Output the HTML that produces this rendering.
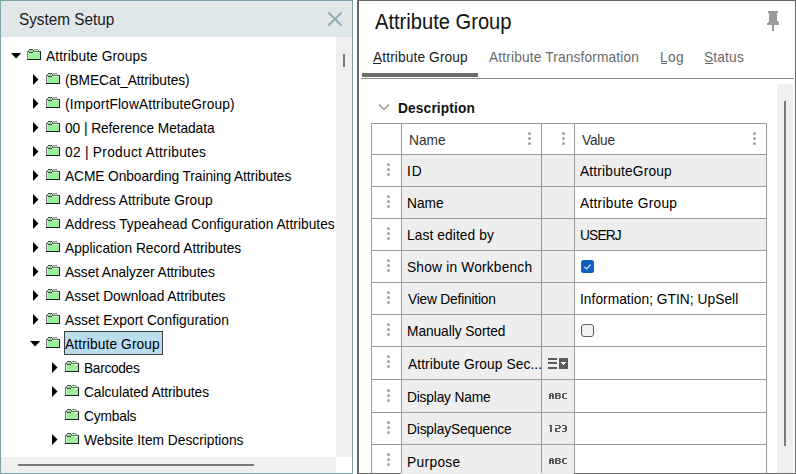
<!DOCTYPE html><html><head><meta charset="utf-8"><style>
*{margin:0;padding:0;box-sizing:border-box}
html,body{width:796px;height:474px;overflow:hidden;background:#fff;font-family:"Liberation Sans", sans-serif;}
.abs{position:absolute}
.t{position:absolute;white-space:nowrap;font-size:13.75px;line-height:16px;color:#000}
</style></head><body>
<div class="abs" style="left:0;top:0;width:353px;height:474px;border:1px solid #7ea2a9;background:#fff"></div>
<div class="abs" style="left:1px;top:1px;width:351px;height:36px;background:#dfe7e9;border-bottom:1px solid #d8e4e5"></div>
<div class="t" style="left:19px;top:10px;font-size:17px;line-height:20px;color:#1b1b1b;transform:scaleX(0.9);transform-origin:0 0">System Setup</div>
<svg class="abs" style="left:327px;top:11px" width="16" height="16" viewBox="0 0 16 16"><path d="M1.5 1.5 L14.5 14.5 M14.5 1.5 L1.5 14.5" stroke="#8aabb1" stroke-width="1.8"/></svg>
<div class="abs" style="left:336px;top:37px;width:16px;height:420px;background:#efefef"></div>
<div class="abs" style="left:343px;top:54px;width:2px;height:13px;background:#7a7a7a"></div>
<div class="abs" style="left:1px;top:457px;width:335px;height:16px;background:#efefef"></div>
<div class="abs" style="left:18px;top:464px;width:236px;height:2px;background:#7a7a7a"></div>
<div class="abs" style="left:11px;top:53px;line-height:0"><svg width="11" height="6" viewBox="0 0 11 6"><polygon points="0,0 10.2,0 5.1,5.4" fill="#000"/></svg></div>
<div class="abs" style="left:27px;top:49px;line-height:0"><svg width="14" height="11" viewBox="0 0 14 11" shape-rendering="crispEdges"><rect x="2" y="0" width="4" height="1" fill="#4a4a4a"/><rect x="7" y="0" width="4" height="1" fill="#8a8a8a"/><rect x="1" y="1" width="1" height="1" fill="#8a8a8a"/><rect x="2" y="1" width="4" height="2" fill="#8ae88a"/><rect x="6" y="1" width="1" height="1" fill="#555"/><rect x="7" y="1" width="4" height="1" fill="#c8f4c8"/><rect x="11" y="1" width="1" height="1" fill="#999"/><rect x="0" y="2" width="1" height="8" fill="#777"/><rect x="1" y="2" width="1" height="1" fill="#555"/><rect x="6" y="2" width="7" height="1" fill="#6a6a6a"/><rect x="13" y="2" width="1" height="8" fill="#222"/><rect x="1" y="3" width="12" height="7" fill="#98f098"/><rect x="1" y="3" width="1" height="7" fill="#c8f8c8"/><rect x="6" y="3" width="7" height="1" fill="#d8f8d8"/><rect x="2" y="3" width="4" height="1" fill="#444"/><rect x="0" y="10" width="14" height="1" fill="#1e1e1e"/></svg></div>
<div class="t" style="left:46px;top:49px;letter-spacing:0.067px">Attribute Groups</div>
<div class="abs" style="left:33px;top:74px;line-height:0"><svg width="6" height="11" viewBox="0 0 6 11"><polygon points="0,0 5.5,5.5 0,11" fill="#000"/></svg></div>
<div class="abs" style="left:46px;top:73px;line-height:0"><svg width="14" height="11" viewBox="0 0 14 11" shape-rendering="crispEdges"><rect x="2" y="0" width="4" height="1" fill="#4a4a4a"/><rect x="7" y="0" width="4" height="1" fill="#8a8a8a"/><rect x="1" y="1" width="1" height="1" fill="#8a8a8a"/><rect x="2" y="1" width="4" height="2" fill="#8ae88a"/><rect x="6" y="1" width="1" height="1" fill="#555"/><rect x="7" y="1" width="4" height="1" fill="#c8f4c8"/><rect x="11" y="1" width="1" height="1" fill="#999"/><rect x="0" y="2" width="1" height="8" fill="#777"/><rect x="1" y="2" width="1" height="1" fill="#555"/><rect x="6" y="2" width="7" height="1" fill="#6a6a6a"/><rect x="13" y="2" width="1" height="8" fill="#222"/><rect x="1" y="3" width="12" height="7" fill="#98f098"/><rect x="1" y="3" width="1" height="7" fill="#c8f8c8"/><rect x="6" y="3" width="7" height="1" fill="#d8f8d8"/><rect x="2" y="3" width="4" height="1" fill="#444"/><rect x="0" y="10" width="14" height="1" fill="#1e1e1e"/></svg></div>
<div class="t" style="left:65px;top:73px;letter-spacing:-0.083px">(BMECat_Attributes)</div>
<div class="abs" style="left:33px;top:98px;line-height:0"><svg width="6" height="11" viewBox="0 0 6 11"><polygon points="0,0 5.5,5.5 0,11" fill="#000"/></svg></div>
<div class="abs" style="left:46px;top:97px;line-height:0"><svg width="14" height="11" viewBox="0 0 14 11" shape-rendering="crispEdges"><rect x="2" y="0" width="4" height="1" fill="#4a4a4a"/><rect x="7" y="0" width="4" height="1" fill="#8a8a8a"/><rect x="1" y="1" width="1" height="1" fill="#8a8a8a"/><rect x="2" y="1" width="4" height="2" fill="#8ae88a"/><rect x="6" y="1" width="1" height="1" fill="#555"/><rect x="7" y="1" width="4" height="1" fill="#c8f4c8"/><rect x="11" y="1" width="1" height="1" fill="#999"/><rect x="0" y="2" width="1" height="8" fill="#777"/><rect x="1" y="2" width="1" height="1" fill="#555"/><rect x="6" y="2" width="7" height="1" fill="#6a6a6a"/><rect x="13" y="2" width="1" height="8" fill="#222"/><rect x="1" y="3" width="12" height="7" fill="#98f098"/><rect x="1" y="3" width="1" height="7" fill="#c8f8c8"/><rect x="6" y="3" width="7" height="1" fill="#d8f8d8"/><rect x="2" y="3" width="4" height="1" fill="#444"/><rect x="0" y="10" width="14" height="1" fill="#1e1e1e"/></svg></div>
<div class="t" style="left:65px;top:97px;letter-spacing:0.124px">(ImportFlowAttributeGroup)</div>
<div class="abs" style="left:33px;top:122px;line-height:0"><svg width="6" height="11" viewBox="0 0 6 11"><polygon points="0,0 5.5,5.5 0,11" fill="#000"/></svg></div>
<div class="abs" style="left:46px;top:121px;line-height:0"><svg width="14" height="11" viewBox="0 0 14 11" shape-rendering="crispEdges"><rect x="2" y="0" width="4" height="1" fill="#4a4a4a"/><rect x="7" y="0" width="4" height="1" fill="#8a8a8a"/><rect x="1" y="1" width="1" height="1" fill="#8a8a8a"/><rect x="2" y="1" width="4" height="2" fill="#8ae88a"/><rect x="6" y="1" width="1" height="1" fill="#555"/><rect x="7" y="1" width="4" height="1" fill="#c8f4c8"/><rect x="11" y="1" width="1" height="1" fill="#999"/><rect x="0" y="2" width="1" height="8" fill="#777"/><rect x="1" y="2" width="1" height="1" fill="#555"/><rect x="6" y="2" width="7" height="1" fill="#6a6a6a"/><rect x="13" y="2" width="1" height="8" fill="#222"/><rect x="1" y="3" width="12" height="7" fill="#98f098"/><rect x="1" y="3" width="1" height="7" fill="#c8f8c8"/><rect x="6" y="3" width="7" height="1" fill="#d8f8d8"/><rect x="2" y="3" width="4" height="1" fill="#444"/><rect x="0" y="10" width="14" height="1" fill="#1e1e1e"/></svg></div>
<div class="t" style="left:65px;top:121px;letter-spacing:-0.068px">00 | Reference Metadata</div>
<div class="abs" style="left:33px;top:146px;line-height:0"><svg width="6" height="11" viewBox="0 0 6 11"><polygon points="0,0 5.5,5.5 0,11" fill="#000"/></svg></div>
<div class="abs" style="left:46px;top:145px;line-height:0"><svg width="14" height="11" viewBox="0 0 14 11" shape-rendering="crispEdges"><rect x="2" y="0" width="4" height="1" fill="#4a4a4a"/><rect x="7" y="0" width="4" height="1" fill="#8a8a8a"/><rect x="1" y="1" width="1" height="1" fill="#8a8a8a"/><rect x="2" y="1" width="4" height="2" fill="#8ae88a"/><rect x="6" y="1" width="1" height="1" fill="#555"/><rect x="7" y="1" width="4" height="1" fill="#c8f4c8"/><rect x="11" y="1" width="1" height="1" fill="#999"/><rect x="0" y="2" width="1" height="8" fill="#777"/><rect x="1" y="2" width="1" height="1" fill="#555"/><rect x="6" y="2" width="7" height="1" fill="#6a6a6a"/><rect x="13" y="2" width="1" height="8" fill="#222"/><rect x="1" y="3" width="12" height="7" fill="#98f098"/><rect x="1" y="3" width="1" height="7" fill="#c8f8c8"/><rect x="6" y="3" width="7" height="1" fill="#d8f8d8"/><rect x="2" y="3" width="4" height="1" fill="#444"/><rect x="0" y="10" width="14" height="1" fill="#1e1e1e"/></svg></div>
<div class="t" style="left:65px;top:145px;letter-spacing:0.268px">02 | Product Attributes</div>
<div class="abs" style="left:33px;top:170px;line-height:0"><svg width="6" height="11" viewBox="0 0 6 11"><polygon points="0,0 5.5,5.5 0,11" fill="#000"/></svg></div>
<div class="abs" style="left:46px;top:169px;line-height:0"><svg width="14" height="11" viewBox="0 0 14 11" shape-rendering="crispEdges"><rect x="2" y="0" width="4" height="1" fill="#4a4a4a"/><rect x="7" y="0" width="4" height="1" fill="#8a8a8a"/><rect x="1" y="1" width="1" height="1" fill="#8a8a8a"/><rect x="2" y="1" width="4" height="2" fill="#8ae88a"/><rect x="6" y="1" width="1" height="1" fill="#555"/><rect x="7" y="1" width="4" height="1" fill="#c8f4c8"/><rect x="11" y="1" width="1" height="1" fill="#999"/><rect x="0" y="2" width="1" height="8" fill="#777"/><rect x="1" y="2" width="1" height="1" fill="#555"/><rect x="6" y="2" width="7" height="1" fill="#6a6a6a"/><rect x="13" y="2" width="1" height="8" fill="#222"/><rect x="1" y="3" width="12" height="7" fill="#98f098"/><rect x="1" y="3" width="1" height="7" fill="#c8f8c8"/><rect x="6" y="3" width="7" height="1" fill="#d8f8d8"/><rect x="2" y="3" width="4" height="1" fill="#444"/><rect x="0" y="10" width="14" height="1" fill="#1e1e1e"/></svg></div>
<div class="t" style="left:65px;top:169px;letter-spacing:-0.088px">ACME Onboarding Training Attributes</div>
<div class="abs" style="left:33px;top:194px;line-height:0"><svg width="6" height="11" viewBox="0 0 6 11"><polygon points="0,0 5.5,5.5 0,11" fill="#000"/></svg></div>
<div class="abs" style="left:46px;top:193px;line-height:0"><svg width="14" height="11" viewBox="0 0 14 11" shape-rendering="crispEdges"><rect x="2" y="0" width="4" height="1" fill="#4a4a4a"/><rect x="7" y="0" width="4" height="1" fill="#8a8a8a"/><rect x="1" y="1" width="1" height="1" fill="#8a8a8a"/><rect x="2" y="1" width="4" height="2" fill="#8ae88a"/><rect x="6" y="1" width="1" height="1" fill="#555"/><rect x="7" y="1" width="4" height="1" fill="#c8f4c8"/><rect x="11" y="1" width="1" height="1" fill="#999"/><rect x="0" y="2" width="1" height="8" fill="#777"/><rect x="1" y="2" width="1" height="1" fill="#555"/><rect x="6" y="2" width="7" height="1" fill="#6a6a6a"/><rect x="13" y="2" width="1" height="8" fill="#222"/><rect x="1" y="3" width="12" height="7" fill="#98f098"/><rect x="1" y="3" width="1" height="7" fill="#c8f8c8"/><rect x="6" y="3" width="7" height="1" fill="#d8f8d8"/><rect x="2" y="3" width="4" height="1" fill="#444"/><rect x="0" y="10" width="14" height="1" fill="#1e1e1e"/></svg></div>
<div class="t" style="left:65px;top:193px;letter-spacing:0.036px">Address Attribute Group</div>
<div class="abs" style="left:33px;top:218px;line-height:0"><svg width="6" height="11" viewBox="0 0 6 11"><polygon points="0,0 5.5,5.5 0,11" fill="#000"/></svg></div>
<div class="abs" style="left:46px;top:217px;line-height:0"><svg width="14" height="11" viewBox="0 0 14 11" shape-rendering="crispEdges"><rect x="2" y="0" width="4" height="1" fill="#4a4a4a"/><rect x="7" y="0" width="4" height="1" fill="#8a8a8a"/><rect x="1" y="1" width="1" height="1" fill="#8a8a8a"/><rect x="2" y="1" width="4" height="2" fill="#8ae88a"/><rect x="6" y="1" width="1" height="1" fill="#555"/><rect x="7" y="1" width="4" height="1" fill="#c8f4c8"/><rect x="11" y="1" width="1" height="1" fill="#999"/><rect x="0" y="2" width="1" height="8" fill="#777"/><rect x="1" y="2" width="1" height="1" fill="#555"/><rect x="6" y="2" width="7" height="1" fill="#6a6a6a"/><rect x="13" y="2" width="1" height="8" fill="#222"/><rect x="1" y="3" width="12" height="7" fill="#98f098"/><rect x="1" y="3" width="1" height="7" fill="#c8f8c8"/><rect x="6" y="3" width="7" height="1" fill="#d8f8d8"/><rect x="2" y="3" width="4" height="1" fill="#444"/><rect x="0" y="10" width="14" height="1" fill="#1e1e1e"/></svg></div>
<div class="t" style="left:65px;top:217px;letter-spacing:0.022px">Address Typeahead Configuration Attributes</div>
<div class="abs" style="left:33px;top:242px;line-height:0"><svg width="6" height="11" viewBox="0 0 6 11"><polygon points="0,0 5.5,5.5 0,11" fill="#000"/></svg></div>
<div class="abs" style="left:46px;top:241px;line-height:0"><svg width="14" height="11" viewBox="0 0 14 11" shape-rendering="crispEdges"><rect x="2" y="0" width="4" height="1" fill="#4a4a4a"/><rect x="7" y="0" width="4" height="1" fill="#8a8a8a"/><rect x="1" y="1" width="1" height="1" fill="#8a8a8a"/><rect x="2" y="1" width="4" height="2" fill="#8ae88a"/><rect x="6" y="1" width="1" height="1" fill="#555"/><rect x="7" y="1" width="4" height="1" fill="#c8f4c8"/><rect x="11" y="1" width="1" height="1" fill="#999"/><rect x="0" y="2" width="1" height="8" fill="#777"/><rect x="1" y="2" width="1" height="1" fill="#555"/><rect x="6" y="2" width="7" height="1" fill="#6a6a6a"/><rect x="13" y="2" width="1" height="8" fill="#222"/><rect x="1" y="3" width="12" height="7" fill="#98f098"/><rect x="1" y="3" width="1" height="7" fill="#c8f8c8"/><rect x="6" y="3" width="7" height="1" fill="#d8f8d8"/><rect x="2" y="3" width="4" height="1" fill="#444"/><rect x="0" y="10" width="14" height="1" fill="#1e1e1e"/></svg></div>
<div class="t" style="left:65px;top:241px;letter-spacing:-0.011px">Application Record Attributes</div>
<div class="abs" style="left:33px;top:266px;line-height:0"><svg width="6" height="11" viewBox="0 0 6 11"><polygon points="0,0 5.5,5.5 0,11" fill="#000"/></svg></div>
<div class="abs" style="left:46px;top:265px;line-height:0"><svg width="14" height="11" viewBox="0 0 14 11" shape-rendering="crispEdges"><rect x="2" y="0" width="4" height="1" fill="#4a4a4a"/><rect x="7" y="0" width="4" height="1" fill="#8a8a8a"/><rect x="1" y="1" width="1" height="1" fill="#8a8a8a"/><rect x="2" y="1" width="4" height="2" fill="#8ae88a"/><rect x="6" y="1" width="1" height="1" fill="#555"/><rect x="7" y="1" width="4" height="1" fill="#c8f4c8"/><rect x="11" y="1" width="1" height="1" fill="#999"/><rect x="0" y="2" width="1" height="8" fill="#777"/><rect x="1" y="2" width="1" height="1" fill="#555"/><rect x="6" y="2" width="7" height="1" fill="#6a6a6a"/><rect x="13" y="2" width="1" height="8" fill="#222"/><rect x="1" y="3" width="12" height="7" fill="#98f098"/><rect x="1" y="3" width="1" height="7" fill="#c8f8c8"/><rect x="6" y="3" width="7" height="1" fill="#d8f8d8"/><rect x="2" y="3" width="4" height="1" fill="#444"/><rect x="0" y="10" width="14" height="1" fill="#1e1e1e"/></svg></div>
<div class="t" style="left:65px;top:265px;letter-spacing:-0.096px">Asset Analyzer Attributes</div>
<div class="abs" style="left:33px;top:290px;line-height:0"><svg width="6" height="11" viewBox="0 0 6 11"><polygon points="0,0 5.5,5.5 0,11" fill="#000"/></svg></div>
<div class="abs" style="left:46px;top:289px;line-height:0"><svg width="14" height="11" viewBox="0 0 14 11" shape-rendering="crispEdges"><rect x="2" y="0" width="4" height="1" fill="#4a4a4a"/><rect x="7" y="0" width="4" height="1" fill="#8a8a8a"/><rect x="1" y="1" width="1" height="1" fill="#8a8a8a"/><rect x="2" y="1" width="4" height="2" fill="#8ae88a"/><rect x="6" y="1" width="1" height="1" fill="#555"/><rect x="7" y="1" width="4" height="1" fill="#c8f4c8"/><rect x="11" y="1" width="1" height="1" fill="#999"/><rect x="0" y="2" width="1" height="8" fill="#777"/><rect x="1" y="2" width="1" height="1" fill="#555"/><rect x="6" y="2" width="7" height="1" fill="#6a6a6a"/><rect x="13" y="2" width="1" height="8" fill="#222"/><rect x="1" y="3" width="12" height="7" fill="#98f098"/><rect x="1" y="3" width="1" height="7" fill="#c8f8c8"/><rect x="6" y="3" width="7" height="1" fill="#d8f8d8"/><rect x="2" y="3" width="4" height="1" fill="#444"/><rect x="0" y="10" width="14" height="1" fill="#1e1e1e"/></svg></div>
<div class="t" style="left:65px;top:289px;letter-spacing:-0.004px">Asset Download Attributes</div>
<div class="abs" style="left:33px;top:314px;line-height:0"><svg width="6" height="11" viewBox="0 0 6 11"><polygon points="0,0 5.5,5.5 0,11" fill="#000"/></svg></div>
<div class="abs" style="left:46px;top:313px;line-height:0"><svg width="14" height="11" viewBox="0 0 14 11" shape-rendering="crispEdges"><rect x="2" y="0" width="4" height="1" fill="#4a4a4a"/><rect x="7" y="0" width="4" height="1" fill="#8a8a8a"/><rect x="1" y="1" width="1" height="1" fill="#8a8a8a"/><rect x="2" y="1" width="4" height="2" fill="#8ae88a"/><rect x="6" y="1" width="1" height="1" fill="#555"/><rect x="7" y="1" width="4" height="1" fill="#c8f4c8"/><rect x="11" y="1" width="1" height="1" fill="#999"/><rect x="0" y="2" width="1" height="8" fill="#777"/><rect x="1" y="2" width="1" height="1" fill="#555"/><rect x="6" y="2" width="7" height="1" fill="#6a6a6a"/><rect x="13" y="2" width="1" height="8" fill="#222"/><rect x="1" y="3" width="12" height="7" fill="#98f098"/><rect x="1" y="3" width="1" height="7" fill="#c8f8c8"/><rect x="6" y="3" width="7" height="1" fill="#d8f8d8"/><rect x="2" y="3" width="4" height="1" fill="#444"/><rect x="0" y="10" width="14" height="1" fill="#1e1e1e"/></svg></div>
<div class="t" style="left:65px;top:313px;letter-spacing:0.012px">Asset Export Configuration</div>
<div class="abs" style="left:30px;top:341px;line-height:0"><svg width="11" height="6" viewBox="0 0 11 6"><polygon points="0,0 10.2,0 5.1,5.4" fill="#000"/></svg></div>
<div class="abs" style="left:46px;top:337px;line-height:0"><svg width="14" height="11" viewBox="0 0 14 11" shape-rendering="crispEdges"><rect x="2" y="0" width="4" height="1" fill="#4a4a4a"/><rect x="7" y="0" width="4" height="1" fill="#8a8a8a"/><rect x="1" y="1" width="1" height="1" fill="#8a8a8a"/><rect x="2" y="1" width="4" height="2" fill="#8ae88a"/><rect x="6" y="1" width="1" height="1" fill="#555"/><rect x="7" y="1" width="4" height="1" fill="#c8f4c8"/><rect x="11" y="1" width="1" height="1" fill="#999"/><rect x="0" y="2" width="1" height="8" fill="#777"/><rect x="1" y="2" width="1" height="1" fill="#555"/><rect x="6" y="2" width="7" height="1" fill="#6a6a6a"/><rect x="13" y="2" width="1" height="8" fill="#222"/><rect x="1" y="3" width="12" height="7" fill="#98f098"/><rect x="1" y="3" width="1" height="7" fill="#c8f8c8"/><rect x="6" y="3" width="7" height="1" fill="#d8f8d8"/><rect x="2" y="3" width="4" height="1" fill="#444"/><rect x="0" y="10" width="14" height="1" fill="#1e1e1e"/></svg></div>
<div class="abs" style="left:64px;top:331px;width:99px;height:24px;background:#badcef;border:1px solid #40403e"></div>
<div class="t" style="left:65px;top:337px;letter-spacing:0.107px">Attribute Group</div>
<div class="abs" style="left:52px;top:362px;line-height:0"><svg width="6" height="11" viewBox="0 0 6 11"><polygon points="0,0 5.5,5.5 0,11" fill="#000"/></svg></div>
<div class="abs" style="left:65px;top:361px;line-height:0"><svg width="14" height="11" viewBox="0 0 14 11" shape-rendering="crispEdges"><rect x="2" y="0" width="4" height="1" fill="#4a4a4a"/><rect x="7" y="0" width="4" height="1" fill="#8a8a8a"/><rect x="1" y="1" width="1" height="1" fill="#8a8a8a"/><rect x="2" y="1" width="4" height="2" fill="#8ae88a"/><rect x="6" y="1" width="1" height="1" fill="#555"/><rect x="7" y="1" width="4" height="1" fill="#c8f4c8"/><rect x="11" y="1" width="1" height="1" fill="#999"/><rect x="0" y="2" width="1" height="8" fill="#777"/><rect x="1" y="2" width="1" height="1" fill="#555"/><rect x="6" y="2" width="7" height="1" fill="#6a6a6a"/><rect x="13" y="2" width="1" height="8" fill="#222"/><rect x="1" y="3" width="12" height="7" fill="#98f098"/><rect x="1" y="3" width="1" height="7" fill="#c8f8c8"/><rect x="6" y="3" width="7" height="1" fill="#d8f8d8"/><rect x="2" y="3" width="4" height="1" fill="#444"/><rect x="0" y="10" width="14" height="1" fill="#1e1e1e"/></svg></div>
<div class="t" style="left:84px;top:361px;letter-spacing:-0.329px">Barcodes</div>
<div class="abs" style="left:52px;top:386px;line-height:0"><svg width="6" height="11" viewBox="0 0 6 11"><polygon points="0,0 5.5,5.5 0,11" fill="#000"/></svg></div>
<div class="abs" style="left:65px;top:385px;line-height:0"><svg width="14" height="11" viewBox="0 0 14 11" shape-rendering="crispEdges"><rect x="2" y="0" width="4" height="1" fill="#4a4a4a"/><rect x="7" y="0" width="4" height="1" fill="#8a8a8a"/><rect x="1" y="1" width="1" height="1" fill="#8a8a8a"/><rect x="2" y="1" width="4" height="2" fill="#8ae88a"/><rect x="6" y="1" width="1" height="1" fill="#555"/><rect x="7" y="1" width="4" height="1" fill="#c8f4c8"/><rect x="11" y="1" width="1" height="1" fill="#999"/><rect x="0" y="2" width="1" height="8" fill="#777"/><rect x="1" y="2" width="1" height="1" fill="#555"/><rect x="6" y="2" width="7" height="1" fill="#6a6a6a"/><rect x="13" y="2" width="1" height="8" fill="#222"/><rect x="1" y="3" width="12" height="7" fill="#98f098"/><rect x="1" y="3" width="1" height="7" fill="#c8f8c8"/><rect x="6" y="3" width="7" height="1" fill="#d8f8d8"/><rect x="2" y="3" width="4" height="1" fill="#444"/><rect x="0" y="10" width="14" height="1" fill="#1e1e1e"/></svg></div>
<div class="t" style="left:84px;top:385px;letter-spacing:-0.055px">Calculated Attributes</div>
<div class="abs" style="left:65px;top:409px;line-height:0"><svg width="14" height="11" viewBox="0 0 14 11" shape-rendering="crispEdges"><rect x="2" y="0" width="4" height="1" fill="#4a4a4a"/><rect x="7" y="0" width="4" height="1" fill="#8a8a8a"/><rect x="1" y="1" width="1" height="1" fill="#8a8a8a"/><rect x="2" y="1" width="4" height="2" fill="#8ae88a"/><rect x="6" y="1" width="1" height="1" fill="#555"/><rect x="7" y="1" width="4" height="1" fill="#c8f4c8"/><rect x="11" y="1" width="1" height="1" fill="#999"/><rect x="0" y="2" width="1" height="8" fill="#777"/><rect x="1" y="2" width="1" height="1" fill="#555"/><rect x="6" y="2" width="7" height="1" fill="#6a6a6a"/><rect x="13" y="2" width="1" height="8" fill="#222"/><rect x="1" y="3" width="12" height="7" fill="#98f098"/><rect x="1" y="3" width="1" height="7" fill="#c8f8c8"/><rect x="6" y="3" width="7" height="1" fill="#d8f8d8"/><rect x="2" y="3" width="4" height="1" fill="#444"/><rect x="0" y="10" width="14" height="1" fill="#1e1e1e"/></svg></div>
<div class="t" style="left:84px;top:409px;letter-spacing:-0.167px">Cymbals</div>
<div class="abs" style="left:52px;top:434px;line-height:0"><svg width="6" height="11" viewBox="0 0 6 11"><polygon points="0,0 5.5,5.5 0,11" fill="#000"/></svg></div>
<div class="abs" style="left:65px;top:433px;line-height:0"><svg width="14" height="11" viewBox="0 0 14 11" shape-rendering="crispEdges"><rect x="2" y="0" width="4" height="1" fill="#4a4a4a"/><rect x="7" y="0" width="4" height="1" fill="#8a8a8a"/><rect x="1" y="1" width="1" height="1" fill="#8a8a8a"/><rect x="2" y="1" width="4" height="2" fill="#8ae88a"/><rect x="6" y="1" width="1" height="1" fill="#555"/><rect x="7" y="1" width="4" height="1" fill="#c8f4c8"/><rect x="11" y="1" width="1" height="1" fill="#999"/><rect x="0" y="2" width="1" height="8" fill="#777"/><rect x="1" y="2" width="1" height="1" fill="#555"/><rect x="6" y="2" width="7" height="1" fill="#6a6a6a"/><rect x="13" y="2" width="1" height="8" fill="#222"/><rect x="1" y="3" width="12" height="7" fill="#98f098"/><rect x="1" y="3" width="1" height="7" fill="#c8f8c8"/><rect x="6" y="3" width="7" height="1" fill="#d8f8d8"/><rect x="2" y="3" width="4" height="1" fill="#444"/><rect x="0" y="10" width="14" height="1" fill="#1e1e1e"/></svg></div>
<div class="t" style="left:84px;top:433px;letter-spacing:0.0px">Website Item Descriptions</div>
<div class="abs" style="left:357px;top:0;width:439px;height:474px;border:1px solid #666;border-left:2px solid #666;background:#fff"></div>
<div class="t" style="left:375px;top:10px;font-size:21.2px;line-height:24px;color:#111;transform:scaleX(0.95);transform-origin:0 0">Attribute Group</div>
<svg class="abs" style="left:767px;top:11px" width="13" height="20" viewBox="0 0 13 20" shape-rendering="crispEdges"><rect x="1" y="0" width="10" height="2" fill="#999"/><rect x="2" y="2" width="8" height="9" fill="#999"/><polygon points="2,10 10,10 12,12 12,14 0,14 0,12" fill="#999"/><rect x="5" y="14" width="2" height="6" fill="#999"/></svg>
<div class="t" style="left:373px;top:50px;color:#222;letter-spacing:0.107px">Attribute Group</div>
<div class="abs" style="left:373px;top:63px;width:8px;height:1px;background:#222"></div>
<div class="t" style="left:489px;top:50px;color:#686868;letter-spacing:0.139px">Attribute Transformation</div>
<div class="t" style="left:660px;top:50px;color:#686868;letter-spacing:0.35px">Log</div>
<div class="abs" style="left:661px;top:63px;width:6px;height:1px;background:#686868"></div>
<div class="t" style="left:704px;top:50px;color:#686868;letter-spacing:0.16px">Status</div>
<div class="abs" style="left:705px;top:63px;width:8px;height:1px;background:#686868"></div>
<div class="abs" style="left:362px;top:73px;width:116px;height:4px;background:#6e6e6e"></div>
<div class="abs" style="left:361px;top:78px;width:433px;height:1px;background:#8a8a8a"></div>
<div class="abs" style="left:777px;top:84px;width:16px;height:389px;background:#efefef"></div>
<div class="abs" style="left:784px;top:101px;width:2px;height:345px;background:#7a7a7a"></div>
<svg class="abs" style="left:378px;top:103px" width="12" height="8" viewBox="0 0 12 8"><path d="M1 1.5 L6 6.5 L11 1.5" fill="none" stroke="#9a9a9a" stroke-width="1.5"/></svg>
<div class="t" style="left:398px;top:101px;font-weight:bold;color:#111;letter-spacing:0.13px">Description</div>
<div class="abs" style="left:401px;top:154px;width:173px;height:32px;background:#eeeeee"></div>
<div class="abs" style="left:574px;top:154px;width:192px;height:32px;background:#eeeeee"></div>
<div class="abs" style="left:401px;top:186px;width:173px;height:32px;background:#eeeeee"></div>
<div class="abs" style="left:401px;top:218px;width:173px;height:32px;background:#eeeeee"></div>
<div class="abs" style="left:574px;top:218px;width:192px;height:32px;background:#eeeeee"></div>
<div class="abs" style="left:401px;top:250px;width:173px;height:32px;background:#eeeeee"></div>
<div class="abs" style="left:401px;top:282px;width:173px;height:32px;background:#eeeeee"></div>
<div class="abs" style="left:401px;top:314px;width:173px;height:32px;background:#eeeeee"></div>
<div class="abs" style="left:401px;top:346px;width:173px;height:33px;background:#eeeeee"></div>
<div class="abs" style="left:401px;top:379px;width:173px;height:33px;background:#eeeeee"></div>
<div class="abs" style="left:401px;top:412px;width:173px;height:32px;background:#eeeeee"></div>
<div class="abs" style="left:401px;top:444px;width:173px;height:33px;background:#eeeeee"></div>
<div class="abs" style="left:371px;top:123px;width:396px;height:1px;background:#9b9b9b"></div>
<div class="abs" style="left:371px;top:154px;width:396px;height:1px;background:#9b9b9b"></div>
<div class="abs" style="left:371px;top:186px;width:396px;height:1px;background:#9b9b9b"></div>
<div class="abs" style="left:371px;top:218px;width:396px;height:1px;background:#9b9b9b"></div>
<div class="abs" style="left:371px;top:250px;width:396px;height:1px;background:#9b9b9b"></div>
<div class="abs" style="left:371px;top:282px;width:396px;height:1px;background:#9b9b9b"></div>
<div class="abs" style="left:371px;top:314px;width:396px;height:1px;background:#9b9b9b"></div>
<div class="abs" style="left:371px;top:346px;width:396px;height:1px;background:#9b9b9b"></div>
<div class="abs" style="left:371px;top:379px;width:396px;height:1px;background:#9b9b9b"></div>
<div class="abs" style="left:371px;top:412px;width:396px;height:1px;background:#9b9b9b"></div>
<div class="abs" style="left:371px;top:444px;width:396px;height:1px;background:#9b9b9b"></div>
<div class="abs" style="left:371px;top:123px;width:1px;height:350px;background:#9b9b9b"></div>
<div class="abs" style="left:401px;top:123px;width:1px;height:350px;background:#9b9b9b"></div>
<div class="abs" style="left:541px;top:123px;width:1px;height:350px;background:#9b9b9b"></div>
<div class="abs" style="left:574px;top:123px;width:1px;height:350px;background:#9b9b9b"></div>
<div class="abs" style="left:766px;top:123px;width:1px;height:350px;background:#9b9b9b"></div>
<div class="t" style="left:409px;top:133px;color:#333">Name</div>
<div class="t" style="left:582px;top:133px;color:#333;letter-spacing:-0.25px">Value</div>
<div class="abs" style="left:528.3px;top:132.3px;width:3.2px;height:3.2px;border-radius:50%;background:#a2a2a2"></div><div class="abs" style="left:528.3px;top:137.3px;width:3.2px;height:3.2px;border-radius:50%;background:#a2a2a2"></div><div class="abs" style="left:528.3px;top:142.3px;width:3.2px;height:3.2px;border-radius:50%;background:#a2a2a2"></div>
<div class="abs" style="left:562.3px;top:132.3px;width:3.2px;height:3.2px;border-radius:50%;background:#a2a2a2"></div><div class="abs" style="left:562.3px;top:137.3px;width:3.2px;height:3.2px;border-radius:50%;background:#a2a2a2"></div><div class="abs" style="left:562.3px;top:142.3px;width:3.2px;height:3.2px;border-radius:50%;background:#a2a2a2"></div>
<div class="abs" style="left:753.3px;top:132.3px;width:3.2px;height:3.2px;border-radius:50%;background:#a2a2a2"></div><div class="abs" style="left:753.3px;top:137.3px;width:3.2px;height:3.2px;border-radius:50%;background:#a2a2a2"></div><div class="abs" style="left:753.3px;top:142.3px;width:3.2px;height:3.2px;border-radius:50%;background:#a2a2a2"></div>
<div class="abs" style="left:387.3px;top:163.3px;width:3.2px;height:3.2px;border-radius:50%;background:#a2a2a2"></div><div class="abs" style="left:387.3px;top:168.3px;width:3.2px;height:3.2px;border-radius:50%;background:#a2a2a2"></div><div class="abs" style="left:387.3px;top:173.3px;width:3.2px;height:3.2px;border-radius:50%;background:#a2a2a2"></div>
<div class="t" style="left:407px;top:164px;letter-spacing:0.9px">ID</div>
<div class="t" style="left:580px;top:164px;letter-spacing:0.177px">AttributeGroup</div>
<div class="abs" style="left:387.3px;top:195.3px;width:3.2px;height:3.2px;border-radius:50%;background:#a2a2a2"></div><div class="abs" style="left:387.3px;top:200.3px;width:3.2px;height:3.2px;border-radius:50%;background:#a2a2a2"></div><div class="abs" style="left:387.3px;top:205.3px;width:3.2px;height:3.2px;border-radius:50%;background:#a2a2a2"></div>
<div class="t" style="left:407px;top:196px;letter-spacing:-0.033px">Name</div>
<div class="t" style="left:580px;top:196px;letter-spacing:0.264px">Attribute Group</div>
<div class="abs" style="left:387.3px;top:227.3px;width:3.2px;height:3.2px;border-radius:50%;background:#a2a2a2"></div><div class="abs" style="left:387.3px;top:232.3px;width:3.2px;height:3.2px;border-radius:50%;background:#a2a2a2"></div><div class="abs" style="left:387.3px;top:237.3px;width:3.2px;height:3.2px;border-radius:50%;background:#a2a2a2"></div>
<div class="t" style="left:407px;top:228px;letter-spacing:0.092px">Last edited by</div>
<div class="t" style="left:580px;top:228px;letter-spacing:-0.85px">USERJ</div>
<div class="abs" style="left:387.3px;top:259.3px;width:3.2px;height:3.2px;border-radius:50%;background:#a2a2a2"></div><div class="abs" style="left:387.3px;top:264.3px;width:3.2px;height:3.2px;border-radius:50%;background:#a2a2a2"></div><div class="abs" style="left:387.3px;top:269.3px;width:3.2px;height:3.2px;border-radius:50%;background:#a2a2a2"></div>
<div class="t" style="left:407px;top:260px;letter-spacing:0.188px">Show in Workbench</div>
<div class="abs" style="left:581px;top:260px;width:13px;height:13px;border-radius:2.5px;background:#0f60c0"></div>
<svg class="abs" style="left:581px;top:260px" width="13" height="13" viewBox="0 0 13 13"><path d="M3.5 6.8 L5.6 8.8 L9.6 4.6" fill="none" stroke="#fff" stroke-width="1.05"/></svg>
<div class="abs" style="left:387.3px;top:291.3px;width:3.2px;height:3.2px;border-radius:50%;background:#a2a2a2"></div><div class="abs" style="left:387.3px;top:296.3px;width:3.2px;height:3.2px;border-radius:50%;background:#a2a2a2"></div><div class="abs" style="left:387.3px;top:301.3px;width:3.2px;height:3.2px;border-radius:50%;background:#a2a2a2"></div>
<div class="t" style="left:408px;top:292px;letter-spacing:-0.2px">View Definition</div>
<div class="t" style="left:580px;top:292px;letter-spacing:0.033px">Information; GTIN; UpSell</div>
<div class="abs" style="left:387.3px;top:323.3px;width:3.2px;height:3.2px;border-radius:50%;background:#a2a2a2"></div><div class="abs" style="left:387.3px;top:328.3px;width:3.2px;height:3.2px;border-radius:50%;background:#a2a2a2"></div><div class="abs" style="left:387.3px;top:333.3px;width:3.2px;height:3.2px;border-radius:50%;background:#a2a2a2"></div>
<div class="t" style="left:407px;top:324px;letter-spacing:-0.071px">Manually Sorted</div>
<div class="abs" style="left:581px;top:324px;width:13px;height:13px;border-radius:3px;border:1px solid #5c5c5c;background:#f1f1f1"></div>
<div class="abs" style="left:387.3px;top:355.3px;width:3.2px;height:3.2px;border-radius:50%;background:#a2a2a2"></div><div class="abs" style="left:387.3px;top:360.3px;width:3.2px;height:3.2px;border-radius:50%;background:#a2a2a2"></div><div class="abs" style="left:387.3px;top:365.3px;width:3.2px;height:3.2px;border-radius:50%;background:#a2a2a2"></div>
<div class="t" style="left:408px;top:357px;letter-spacing:0.086px">Attribute Group Sec...</div>
<div class="abs" style="left:548px;top:358px;line-height:0"><svg width="21" height="11" viewBox="0 0 21 11" shape-rendering="crispEdges" fill="#5a5a5a"><rect x="0" y="0" width="9" height="2"/><rect x="0" y="4" width="9" height="2"/><rect x="0" y="9" width="9" height="2"/><rect x="11" y="0" width="9" height="11"/><polygon points="12.2,4 18.8,4 15.5,7.5" fill="#fff"/></svg></div>
<div class="abs" style="left:387.3px;top:389.3px;width:3.2px;height:3.2px;border-radius:50%;background:#a2a2a2"></div><div class="abs" style="left:387.3px;top:394.3px;width:3.2px;height:3.2px;border-radius:50%;background:#a2a2a2"></div><div class="abs" style="left:387.3px;top:399.3px;width:3.2px;height:3.2px;border-radius:50%;background:#a2a2a2"></div>
<div class="t" style="left:407px;top:390px;letter-spacing:-0.182px">Display Name</div>
<div class="abs" style="left:549px;top:393px;line-height:0"><svg width="18" height="6" viewBox="0 0 18 6" shape-rendering="crispEdges" fill="#5a5a5a"><rect x="1" y="0" width="3" height="1"/><rect x="6" y="0" width="5" height="1"/><rect x="14" y="0" width="4" height="1"/><rect x="0" y="1" width="2" height="1"/><rect x="3" y="1" width="2" height="1"/><rect x="6" y="1" width="2" height="1"/><rect x="10" y="1" width="2" height="1"/><rect x="13" y="1" width="2" height="1"/><rect x="0" y="2" width="5" height="1"/><rect x="6" y="2" width="5" height="1"/><rect x="13" y="2" width="2" height="1"/><rect x="0" y="3" width="2" height="1"/><rect x="3" y="3" width="2" height="1"/><rect x="6" y="3" width="2" height="1"/><rect x="10" y="3" width="2" height="1"/><rect x="13" y="3" width="2" height="1"/><rect x="0" y="4" width="2" height="1"/><rect x="3" y="4" width="2" height="1"/><rect x="6" y="4" width="2" height="1"/><rect x="10" y="4" width="2" height="1"/><rect x="13" y="4" width="2" height="1"/><rect x="0" y="5" width="2" height="1"/><rect x="3" y="5" width="2" height="1"/><rect x="6" y="5" width="5" height="1"/><rect x="14" y="5" width="4" height="1"/></svg></div>
<div class="abs" style="left:387.3px;top:421.3px;width:3.2px;height:3.2px;border-radius:50%;background:#a2a2a2"></div><div class="abs" style="left:387.3px;top:426.3px;width:3.2px;height:3.2px;border-radius:50%;background:#a2a2a2"></div><div class="abs" style="left:387.3px;top:431.3px;width:3.2px;height:3.2px;border-radius:50%;background:#a2a2a2"></div>
<div class="t" style="left:407px;top:422px;letter-spacing:-0.164px">DisplaySequence</div>
<div class="abs" style="left:549px;top:425px;line-height:0"><svg width="18" height="7" viewBox="0 0 18 7" shape-rendering="crispEdges" fill="#5a5a5a"><rect x="0" y="0" width="3" height="1"/><rect x="6" y="0" width="5" height="1"/><rect x="13" y="0" width="4" height="1"/><rect x="1" y="1" width="2" height="1"/><rect x="10" y="1" width="2" height="1"/><rect x="16" y="1" width="2" height="1"/><rect x="1" y="2" width="2" height="1"/><rect x="10" y="2" width="2" height="1"/><rect x="16" y="2" width="2" height="1"/><rect x="1" y="3" width="2" height="1"/><rect x="6" y="3" width="5" height="1"/><rect x="14" y="3" width="4" height="1"/><rect x="1" y="4" width="2" height="1"/><rect x="6" y="4" width="2" height="1"/><rect x="16" y="4" width="2" height="1"/><rect x="1" y="5" width="2" height="1"/><rect x="6" y="5" width="2" height="1"/><rect x="16" y="5" width="2" height="1"/><rect x="1" y="6" width="2" height="1"/><rect x="6" y="6" width="5" height="1"/><rect x="13" y="6" width="4" height="1"/></svg></div>
<div class="abs" style="left:387.3px;top:453.3px;width:3.2px;height:3.2px;border-radius:50%;background:#a2a2a2"></div><div class="abs" style="left:387.3px;top:458.3px;width:3.2px;height:3.2px;border-radius:50%;background:#a2a2a2"></div><div class="abs" style="left:387.3px;top:463.3px;width:3.2px;height:3.2px;border-radius:50%;background:#a2a2a2"></div>
<div class="t" style="left:407px;top:455px;letter-spacing:0.333px">Purpose</div>
<div class="abs" style="left:549px;top:458px;line-height:0"><svg width="18" height="6" viewBox="0 0 18 6" shape-rendering="crispEdges" fill="#5a5a5a"><rect x="1" y="0" width="3" height="1"/><rect x="6" y="0" width="5" height="1"/><rect x="14" y="0" width="4" height="1"/><rect x="0" y="1" width="2" height="1"/><rect x="3" y="1" width="2" height="1"/><rect x="6" y="1" width="2" height="1"/><rect x="10" y="1" width="2" height="1"/><rect x="13" y="1" width="2" height="1"/><rect x="0" y="2" width="5" height="1"/><rect x="6" y="2" width="5" height="1"/><rect x="13" y="2" width="2" height="1"/><rect x="0" y="3" width="2" height="1"/><rect x="3" y="3" width="2" height="1"/><rect x="6" y="3" width="2" height="1"/><rect x="10" y="3" width="2" height="1"/><rect x="13" y="3" width="2" height="1"/><rect x="0" y="4" width="2" height="1"/><rect x="3" y="4" width="2" height="1"/><rect x="6" y="4" width="2" height="1"/><rect x="10" y="4" width="2" height="1"/><rect x="13" y="4" width="2" height="1"/><rect x="0" y="5" width="2" height="1"/><rect x="3" y="5" width="2" height="1"/><rect x="6" y="5" width="5" height="1"/><rect x="14" y="5" width="4" height="1"/></svg></div>
</body></html>
